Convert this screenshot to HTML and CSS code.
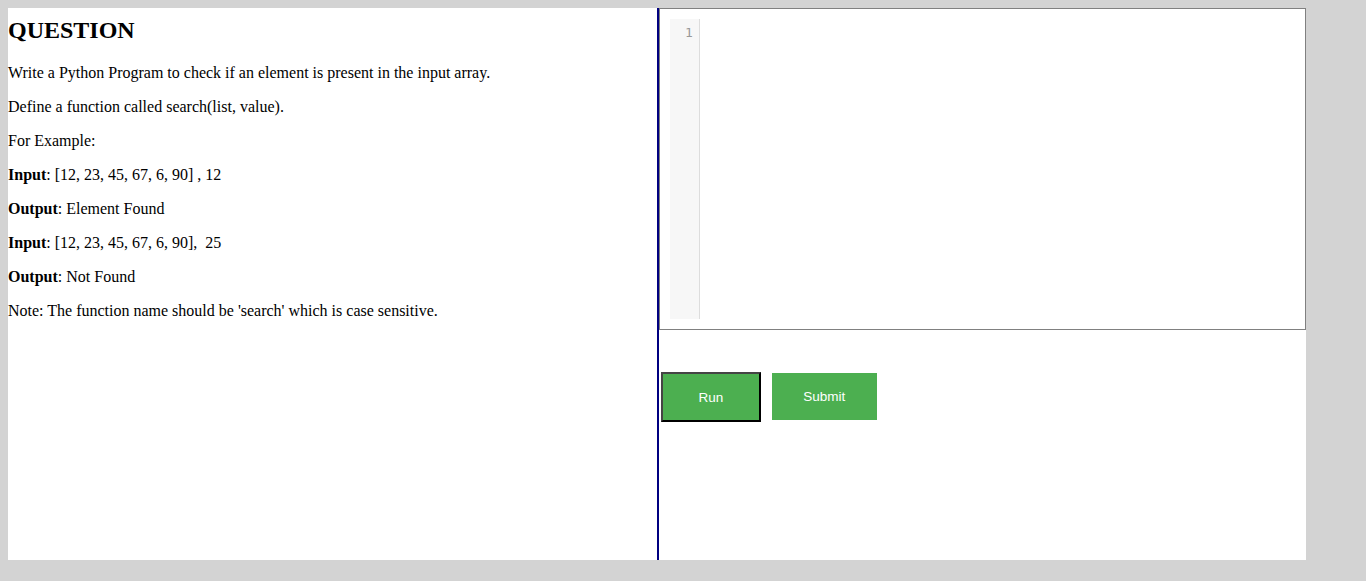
FILE: index.html
```html
<!DOCTYPE html>
<html>
<head>
<meta charset="utf-8">
<link rel="stylesheet" href="styles.css">
</head>
<body>
<div class="container">
  <div class="question">
    <h2>QUESTION</h2>
    <p>Write a Python Program to check if an element is present in the input array.</p>
    <p>Define a function called search(list, value).</p>
    <p>For Example:</p>
    <p><b>Input</b>: [12, 23, 45, 67, 6, 90] , 12</p>
    <p><b>Output</b>: Element Found</p>
    <p><b>Input</b>: [12, 23, 45, 67, 6, 90],&nbsp; 25</p>
    <p><b>Output</b>: Not Found</p>
    <p>Note: The function name should be 'search' which is case sensitive.</p>
  </div>
  <div class="workspace">
    <div class="editor">
      <div class="gutter"><span class="lineno">1</span></div>
      <div class="code"></div>
    </div>
    <div class="actions">
      <button class="btn btn-run">Run</button>
      <button class="btn">Submit</button>
    </div>
  </div>
</div>
</body>
</html>
```
FILE: styles.css
```css
html, body {
  margin: 0;
  padding: 0;
}
body {
  background: #d3d3d3;
  padding: 8px;
  font-family: "Liberation Serif", "Times New Roman", serif;
  font-size: 16px;
  color: #000;
}
.container {
  width: 95vw;
  height: 95vh;
  background: #fff;
  display: flex;
}
.question {
  width: 50%;
  box-sizing: border-box;
}
.question h2 {
  font-size: 24px;
  margin: 9px 0 20px;
  font-weight: bold;
}
.question p {
  margin: 16px 0;
}
.workspace {
  width: 50%;
  box-sizing: border-box;
  border-left: 2px solid #000080;
  display: flex;
  flex-direction: column;
}
.editor {
  height: 322px;
  box-sizing: border-box;
  border: 1px solid #808080;
  padding: 10px;
  display: flex;
}
.gutter {
  width: 29px;
  background: #f7f7f7;
  border-right: 1px solid #ddd;
  text-align: right;
  box-sizing: content-box;
}
.lineno {
  display: block;
  padding: 5px 6px 0 0;
  font-family: "DejaVu Sans Mono", "Liberation Mono", monospace;
  font-size: 13px;
  line-height: 17px;
  color: #999;
}
.code {
  flex: 1;
}
.actions {
  display: flex;
  align-items: flex-start;
  gap: 11px;
  padding: 42px 0 0 2px;
}
.btn {
  background: #4caf50;
  color: #fff;
  border: none;
  width: 105px;
  height: 47px;
  margin-top: 1px;
  font-family: "Liberation Sans", Arial, sans-serif;
  font-size: 13.5px;
  padding: 0;
}
.btn-run {
  width: 100px;
  height: 50px;
  margin-top: 0;
  border: 2px solid;
  border-color: #444 #000 #000 #444;
}
```
